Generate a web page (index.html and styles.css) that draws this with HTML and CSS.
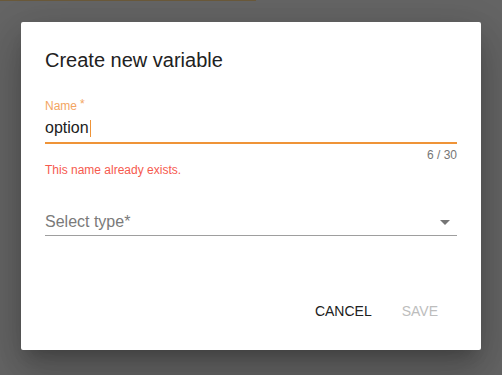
FILE: index.html
```html
<!DOCTYPE html>
<html>
<head>
<meta charset="utf-8">
<link rel="stylesheet" href="styles.css">
</head>
<body>
<div class="topbar"></div>
<div class="dialog">
  <h2 class="title">Create new variable</h2>
  <div class="field">
    <label class="label">Name<span class="req">*</span></label>
    <div class="input focused"><span class="value">option</span><span class="caret"></span></div>
    <div class="counter">6 / 30</div>
    <div class="error">This name already exists.</div>
  </div>
  <div class="select">
    <span class="placeholder">Select type*</span>
    <svg class="arrow" width="10" height="5" viewBox="0 0 10 5"><path d="M0 0h10L5 5z" fill="#757575"/></svg>
  </div>
  <div class="actions">
    <button class="btn">CANCEL</button>
    <button class="btn disabled">SAVE</button>
  </div>
</div>
</body>
</html>
```
FILE: styles.css
```css
html, body {
  margin: 0;
  padding: 0;
  height: 100%;
}
body {
  background: #656565;
  font-family: "Liberation Sans", Arial, sans-serif;
  overflow: hidden;
}
.topbar {
  width: 256px;
  height: 1px;
  background: #6b5a3a;
}
.dialog {
  margin: 21px 0 0 21px;
  width: 460px;
  height: 328px;
  box-sizing: border-box;
  background: #fff;
  border-radius: 2px;
  padding: 24px 24px 0 24px;
  display: flex;
  flex-direction: column;
  box-shadow: 0 11px 15px -7px rgba(0,0,0,.2), 0 24px 38px 3px rgba(0,0,0,.14), 0 9px 46px 8px rgba(0,0,0,.12);
}
.title {
  margin: 0;
  font-size: 20px;
  font-weight: 400;
  line-height: 28px;
  color: #212121;
}
.field {
  margin-top: 24px;
}
.label {
  display: block;
  height: 16px;
  font-size: 12px;
  line-height: 16px;
  color: #f3a562;
}
.req {
  font-size: 12px;
  line-height: 0;
  margin-left: 3px;
  vertical-align: 2px;
}
.input {
  padding: 2px 0 2px;
  font-size: 16px;
  line-height: 24px;
  color: #212121;
  border-bottom: 2px solid #ef9438;
  display: flex;
  align-items: center;
}
.caret {
  display: inline-block;
  width: 1px;
  height: 17px;
  background: #ef9438;
  margin-left: 1px;
}
.counter {
  margin-top: 4px;
  font-size: 12px;
  line-height: 14px;
  color: #757575;
  text-align: right;
}
.error {
  font-size: 12px;
  line-height: 16px;
  color: #f65a4e;
}
.select {
  margin-top: 30px;
  padding: 2px 0 1px;
  border-bottom: 1px solid #9e9e9e;
  display: flex;
  align-items: center;
  justify-content: space-between;
  font-size: 16px;
  line-height: 24px;
  color: #7a7a7a;
}
.arrow {
  margin-right: 7px;
  margin-top: 1px;
}
.actions {
  margin-top: auto;
  margin-bottom: 21px;
  display: flex;
  justify-content: flex-end;
  padding-right: 4px;
}
.btn {
  background: none;
  border: none;
  font-family: "Liberation Sans", Arial, sans-serif;
  font-size: 14px;
  line-height: 20px;
  padding: 8px 15px;
  color: #212121;
}
.btn.disabled {
  color: #bdbdbd;
}
```
